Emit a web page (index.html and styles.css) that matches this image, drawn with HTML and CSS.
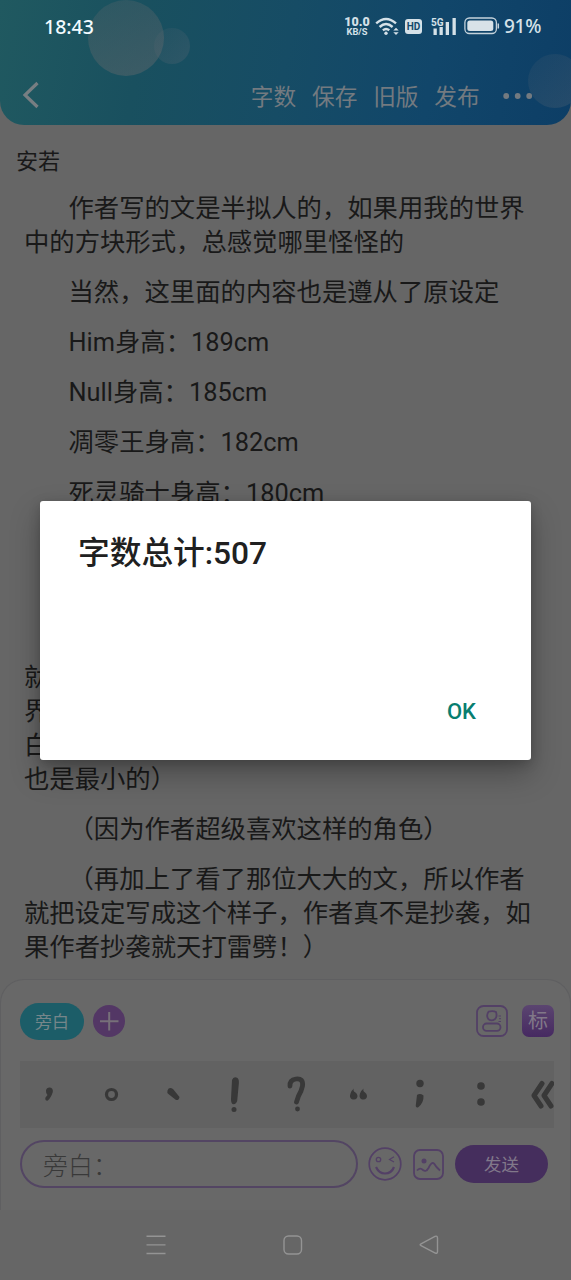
FILE: index.html
```html
<!DOCTYPE html>
<html lang="zh-CN">
<head>
<meta charset="utf-8">
<title>字数总计</title>
<link rel="stylesheet" href="styles.css">
</head>
<body>
<div class="screen">
  <header class="header">
    <svg class="bubbles" width="571" height="125" viewBox="0 0 571 125">
      <defs>
        <linearGradient id="bub" x1="0" y1="0" x2="0.4" y2="1"><stop offset="0" stop-color="#62686c" stop-opacity=".25"/><stop offset="1" stop-color="#62686c" stop-opacity=".45"/></linearGradient>
        <linearGradient id="bub2" x1="0" y1="0" x2="1" y2="1"><stop offset="0" stop-color="#5c6874" stop-opacity=".12"/><stop offset="1" stop-color="#5c6874" stop-opacity=".32"/></linearGradient>
      </defs>
      <circle cx="172" cy="46" r="18" fill="url(#bub2)"/>
      <circle cx="126" cy="38" r="38" fill="url(#bub)"/>
      <circle cx="555" cy="81" r="27" fill="url(#bub2)"/>
    </svg>
    <div class="status">
      <span class="time">18:43</span>
      <div class="indicators">
        <span class="speed"><b>10.0</b><i>KB/S</i></span>
        <svg class="wifi" width="24" height="19" viewBox="0 0 24 19" fill="none" stroke="#d5e1e8" stroke-width="2.4">
          <path d="M1.2 6.4Q11 -2.4 21 6.4M4.6 10Q11 4 17.6 10M7.9 13.3Q11 10.6 14.3 13.3"/>
          <circle cx="11" cy="16.2" r="1.7" fill="#d5e1e8" stroke="none"/>
          <path d="M18.3 13.4L21 10.8L23.7 13.4ZM18.3 15.3L21 17.9L23.7 15.3Z" fill="#d5e1e8" stroke="none"/>
        </svg>
        <span class="hd">HD</span>
        <svg class="signal" width="26" height="18" viewBox="0 0 26 18" fill="#d5e1e8">
          <path d="M2.5 11.500h3.300v6.500h-3.300zM8.500 10h3.300v8h-3.300zM14.700 5h3.300v13h-3.300zM21.500 1h3.300v17h-3.300z"/>
          <text x="0" y="8.500" font-size="10">5G</text>
        </svg>
        <svg class="battery" width="36" height="18" viewBox="0 0 36 18">
          <rect x=".9" y="1" width="31.500" height="15.500" rx="4.500" fill="none" stroke="#c4d2db" stroke-width="1.300"/>
          <rect x="3.300" y="3.500" width="26" height="10.500" rx="2.500" fill="#d8e2e8"/>
          <path d="M34.300 6.500v5" stroke="#c4d2db" stroke-width="1.500"/>
        </svg>
        <span class="percent">91%</span>
      </div>
    </div>
    <nav class="toolbar">
      <svg class="back" width="18" height="28" viewBox="0 0 18 28" fill="none" stroke="#777e82" stroke-width="3.200"><path d="M15.500 2L3 14L15.500 26"/></svg>
      <div class="actions"><span>字数</span><span>保存</span><span>旧版</span><span>发布</span>
        <svg class="more" width="30" height="8" viewBox="0 0 30 8" fill="#737a80"><circle cx="3.200" cy="4" r="2.900"/><circle cx="14.700" cy="4" r="2.900"/><circle cx="26.200" cy="4" r="2.900"/></svg>
      </div>
    </nav>
  </header>

  <main class="story">
    <h1 class="author">安若</h1>
    <div class="text">
      <p>作者写的文是半拟人的，如果用我的世界<br>中的方块形式，总感觉哪里怪怪的</p>
      <p>当然，这里面的内容也是遵从了原设定</p>
      <p>Him身高：189cm</p>
      <p>Null身高：185cm</p>
      <p>凋零王身高：182cm</p>
      <p>死灵骑士身高：180cm</p>
      <p class="blank"></p>
      <p class="blank"></p>
      <p><br>就<br>界<br>白<br>也是最小的）</p>
      <p>（因为作者超级喜欢这样的角色）</p>
      <p>（再加上了看了那位大大的文，所以作者<br>就把设定写成这个样子，作者真不是抄袭，如<br>果作者抄袭就天打雷劈！）</p>
    </div>
  </main>

  <section class="composer">
    <div class="roles">
      <span class="role">旁白</span>
      <svg class="add" width="32" height="32" viewBox="0 0 32 32"><circle cx="16" cy="16" r="16" fill="#533765"/><path d="M7 16.300H25.500M16.200 7V25.500" stroke="#777079" stroke-width="2"/></svg>
      <svg class="person" width="32" height="32" viewBox="0 0 32 32" fill="none" stroke="#534066" stroke-width="1.800">
        <rect x="1" y="1" width="30" height="30" rx="6.500"/>
        <path d="M12.500 6.700Q17 5.500 20 7Q21.500 12 18.800 14.300Q15.500 16.500 12.500 14.300Q9.800 10.500 12.500 6.700Z"/>
        <rect x="7" y="18.500" width="17.500" height="7.300" rx="3.600"/>
        <path d="M22.500 11h2.500M23 13.700h2M22.500 16.500h2.500" stroke-width="1"/>
      </svg>
      <span class="tag">标</span>
    </div>
    <div class="marks"><div class="mark-row">
      <svg viewBox="0 0 60 66"><path d="M27 29.500Q27.500 26.300 31 26.500Q34.300 27 33.800 31Q32 37 28.500 39.700Q25.500 39.500 26.500 36.500L28.500 34Q26.700 32 27 29.500Z"/></svg>
      <svg viewBox="0 0 60 66"><circle cx="30.500" cy="33.500" r="5" fill="none" stroke="#383838" stroke-width="3.200"/></svg>
      <svg viewBox="0 0 60 66"><path d="M24.500 29.500Q26 25.500 30 28L36.500 36Q36 39.700 33 39L26 33.500Q23.500 31.500 24.500 29.500Z"/></svg>
      <svg viewBox="0 0 60 66"><path d="M28 19Q29.500 15 33.500 17Q35.300 18.500 34.800 23L33.200 40Q32 43.800 28.500 43Q27 42 27 38Z"/><circle cx="30" cy="48.500" r="2.500"/></svg>
      <svg viewBox="0 0 60 66"><path d="M24 25Q23.500 19 30 18Q37.500 17 36.500 25Q35.500 30 32.500 35L30.500 41" fill="none" stroke="#383838" stroke-width="4.800" stroke-linecap="round"/><circle cx="31.500" cy="48" r="2.400"/></svg>
      <svg viewBox="0 0 60 66"><path d="M26 27.500Q24.500 30 27.500 31.500Q30.500 34 29 37Q27 39.500 23.500 38Q21 36 22.500 32.500Q23.800 29 26 27.500ZM35.700 27.500Q34.500 30 37 31.500Q40 34 38.500 37Q36.500 39.500 33 38Q30.800 36 32 32.500Q33.500 29 35.700 27.500Z"/></svg>
      <svg viewBox="0 0 60 66"><circle cx="30" cy="22.500" r="3.700"/><path d="M27 34Q30 32 33.500 34.500Q34 42 28 46.500Q25 47 26 42.500Z"/></svg>
      <svg viewBox="0 0 60 66"><circle cx="30" cy="25" r="3.800"/><circle cx="30" cy="41" r="3.800"/></svg>
      <svg viewBox="0 0 60 66"><path d="M29 22.500L21 34.500L28 45M39 22.500L31 34.500L38 45" fill="none" stroke="#383838" stroke-width="5" stroke-linecap="round" stroke-linejoin="round"/></svg>
    </div></div>
    <div class="entry">
      <div class="field">旁白：</div>
      <svg class="smile" width="34" height="34" viewBox="0 0 34 34" fill="none" stroke="#534066" stroke-width="1.700"><circle cx="17" cy="17" r="15.800"/><circle cx="10.500" cy="12.500" r="2.200" stroke-width="1.300"/><path d="M26 9.800L21.500 12.500L26 15" stroke-width="1.200"/><path d="M8 20Q11 26.500 17 26.500Q23.500 26.500 26 20" stroke-width="2.200"/></svg>
      <svg class="picture" width="31" height="31" viewBox="0 0 31 31" fill="none" stroke="#534066" stroke-width="1.800"><rect x="1" y="1" width="29" height="29" rx="6"/><circle cx="11" cy="12" r="2.500" fill="#534066" stroke="none"/><path d="M4 21.500Q7 18 10 21Q13 23.500 15.500 19Q18.500 12.500 21 14.500Q23 18 27 21.500"/></svg>
      <button class="send">发送</button>
    </div>
  </section>

  <footer class="nav">
    <svg width="20" height="20" viewBox="0 0 20 20"><path d="M.5 1.200H19.500M.5 9.900H19.500M.5 18.500H19.500"/></svg>
    <svg width="20" height="20" viewBox="0 0 20 20"><rect x="1" y="1" width="17.500" height="18" rx="4.500"/></svg>
    <svg width="20" height="20" viewBox="0 0 20 20"><path d="M2 8.800L16 1.300Q18.500 .5 18.500 3V16.500Q18.500 19 16.300 18L2 10.700Q.3 9.800 2 8.800Z"/></svg>
  </footer>

  <div class="dialog" role="dialog">
    <h2>字数总计:507</h2>
    <button class="ok">OK</button>
  </div>
</div>
</body>
</html>
```

FILE: styles.css
```css
* { box-sizing: border-box; }
body { margin: 0; background: #666; font-family: Roboto, "Noto Sans CJK SC", sans-serif; }
h1, h2, p { margin: 0; font-weight: 400; }
button { border: 0; padding: 0; font-family: inherit; }
svg { display: block; flex: none; }

.screen { position: relative; width: 571px; height: 1280px; display: flex; flex-direction: column; overflow: hidden; background: #666; }

.header { position: relative; height: 125px; flex: none; overflow: hidden; border-radius: 0 0 24px 24px; background: linear-gradient(100deg, #205960 0%, #19505f 25%, #164c65 50%, #11466a 75%, #0d3e66 100%); }
.bubbles { position: absolute; left: 0; top: 0; }
.status { position: relative; height: 52px; padding: 0 29px 0 44px; display: flex; align-items: center; justify-content: space-between; font-family: "Noto Sans", sans-serif; color: #d5e1e8; }
.time { font-size: 19.500px; font-weight: 500; color: #f2fbff; }
.indicators { display: flex; align-items: center; }
.speed { display: flex; flex-direction: column; align-items: center; width: 26px; margin-right: 5px; font-family: Roboto, sans-serif; font-weight: 700; }
.speed b { font-size: 12.500px; line-height: 11px; height: 10px; }
.speed i { font-style: normal; font-size: 9.300px; line-height: 10px; height: 10px; padding-top: 1px; }
.wifi { margin-right: 6px; }
.hd { width: 17px; height: 15px; border-radius: 3px; background: #d5e1e8; color: #14486a; font: 700 10px/15px Roboto, sans-serif; text-align: center; margin-right: 9px; }
.signal { margin-right: 7px; font-family: Roboto, sans-serif; font-weight: 700; }
.battery { margin-right: 4px; }
.percent { width: 38px; font-size: 19px; font-weight: 500; letter-spacing: -.3px; white-space: nowrap; }

.toolbar { position: relative; height: 73px; padding: 0 38px 0 22px; display: flex; justify-content: space-between; align-items: flex-start; }
.back { margin-top: 29px; }
.actions { margin-top: 29px; display: flex; align-items: center; gap: 15.800px; font-size: 22.700px; line-height: 34px; color: #737a80; }
.more { margin-left: 7.500px; margin-bottom: 5px; }

.story { height: 854px; flex: none; overflow: hidden; color: #191919; }
.author { padding: 22px 16px 0; font-size: 22px; line-height: 30px; }
.text { padding: 14px 24px 0; display: flex; flex-direction: column; gap: 16px; font-size: 25.350px; line-height: 34.100px; white-space: nowrap; }
.text p { text-indent: 44.500px; }
.text p:not(.blank) { min-height: 34px; }
.blank { height: 34px; }

.composer { height: 231px; flex: none; padding: 22px 16px 0 19px; border: 1.500px solid #5f5f61; border-bottom: 0; border-radius: 24px 24px 0 0; background: #686868; }
.roles { display: flex; align-items: center; height: 38px; }
.role { width: 64px; height: 37px; border-radius: 19px; background: #1c5d68; color: #75868a; font-size: 17px; line-height: 39px; text-align: center; }
.add { margin-left: 9px; }
.person { margin-left: auto; }
.tag { width: 32px; height: 32px; margin-left: 14px; border-radius: 7px; background: linear-gradient(#5b4570, #462961); color: #817888; font-size: 20px; line-height: 33px; text-align: center; }
.marks { height: 67px; margin-top: 21px; overflow: hidden; background: #626262; }
.mark-row { display: flex; gap: 1.750px; margin-left: -1px; }
.mark-row svg { width: 60px; height: 66px; fill: #383838; }
.entry { display: flex; align-items: center; margin-top: 12px; height: 48px; }
.field { width: 338px; height: 48px; padding-left: 21px; border: 2px solid #534563; border-radius: 24px; color: #393939; font-size: 25px; font-weight: 300; line-height: 49px; }
.smile { margin-left: 9.500px; }
.picture { margin-left: 11.500px; }
.send { width: 93px; height: 38px; margin-left: 11px; border-radius: 19px; background: #452e5d; color: #81788a; font-size: 17.500px; line-height: 40px; }

.nav { height: 70px; flex: none; padding: 0 132px 0 146px; display: flex; align-items: center; justify-content: space-between; background: #666; }
.nav svg { fill: none; stroke: #949494; stroke-width: 1.400; }

.dialog { position: absolute; left: 40px; top: 501px; width: 491px; height: 259px; padding: 33px 38px 31px; display: flex; flex-direction: column; justify-content: space-between; border-radius: 3px; background: #fff; box-shadow: 0 14px 30px rgba(0, 0, 0, .28), 0 3px 12px rgba(0, 0, 0, .18); }
.dialog h2 { font-size: 31.700px; font-weight: 500; line-height: 40px; color: #202020; }
.ok { align-self: flex-end; margin-right: 17px; background: none; color: #087e70; font-size: 22px; font-weight: 500; line-height: 34px; }
```
